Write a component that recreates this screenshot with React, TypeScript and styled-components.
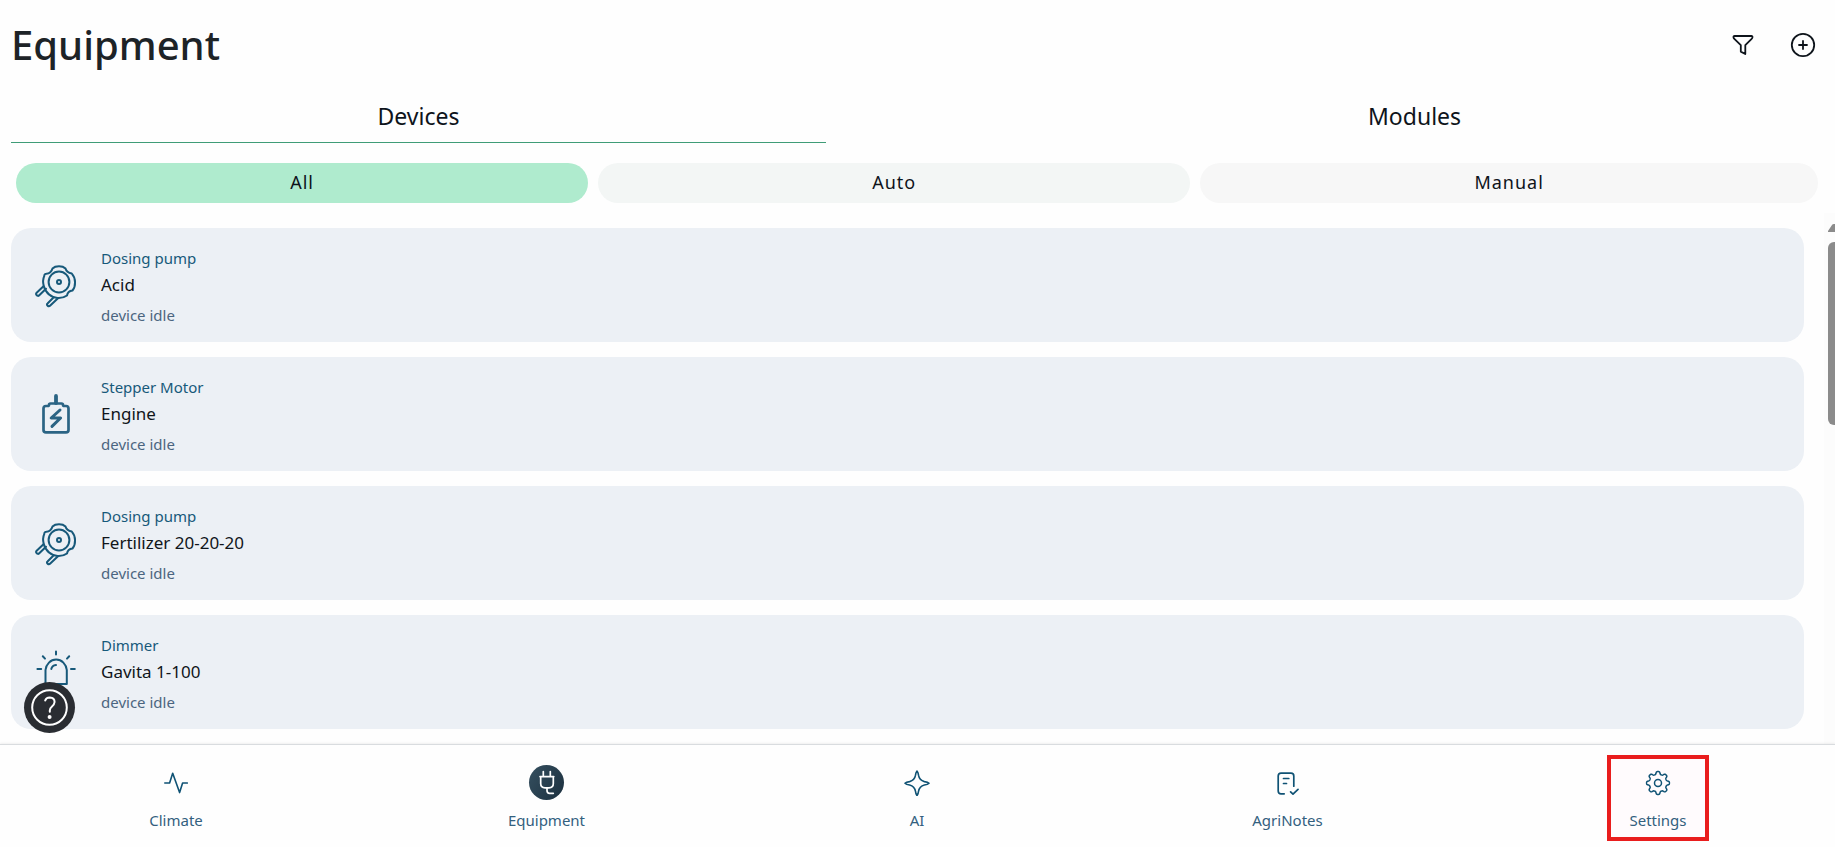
import React from "react";
import styled, { createGlobalStyle } from "styled-components";

const GlobalStyle = createGlobalStyle`
  *, *::before, *::after { box-sizing: border-box; }
  body {
    margin: 0;
    background: #fefefe;
    font-family: "Noto Sans", sans-serif;
    color: #0e141b;
  }
  button { font: inherit; color: inherit; border: 0; background: none; padding: 0; cursor: pointer; }
  a { color: inherit; text-decoration: none; }
  h1, p { margin: 0; }
  svg { display: block; fill: none; stroke: currentColor; stroke-linecap: round; stroke-linejoin: round; }
`;

const Page = styled.div`
  height: 100vh;
  display: flex;
  flex-direction: column;
  overflow: hidden;
`;

const Header = styled.header`
  display: flex;
  justify-content: space-between;
  align-items: center;
  height: 90px;
  padding: 0 18px 0 11px;
`;

const Title = styled.h1`
  font-size: 40px;
  line-height: 56px;
  font-weight: 500;
  color: #1d2327;
`;

const Actions = styled.div`
  display: flex;
  gap: 32px;
`;

const IconButton = styled.button`
  display: grid;
  place-items: center;
  width: 28px;
  height: 28px;
`;

const Tabs = styled.nav`
  display: flex;
  justify-content: space-between;
  padding: 0 13px 0 11px;
`;

const Tab = styled.button<{ $active?: boolean }>`
  width: 45%;
  height: 53px;
  padding-bottom: 1px;
  font-size: 23px;
  line-height: 32px;
  border-bottom: 1px solid ${(p) => (p.$active ? "#3f9c77" : "transparent")};
`;

const Filters = styled.div`
  display: flex;
  gap: 10px;
  padding: 20px 17px 10px 16px;
`;

const Pill = styled.button<{ $tone: string }>`
  flex: 1 1 auto;
  height: 40px;
  padding-bottom: 2px;
  border-radius: 20px;
  background: ${(p) => p.$tone};
  font-size: 18px;
  line-height: 24px;
  letter-spacing: 1px;
`;

const Content = styled.main`
  flex: 1;
  min-height: 0;
  display: flex;
  justify-content: space-between;
`;

const List = styled.ul`
  flex: 1;
  min-width: 0;
  margin: 0;
  padding: 15px 20px 0 11px;
  list-style: none;
  overflow: hidden;
  display: flex;
  flex-direction: column;
  gap: 15px;
`;

const Card = styled.li`
  flex: none;
  display: flex;
  align-items: center;
  gap: 21px;
  height: 114px;
  padding: 0 21px;
  border-radius: 20px;
  background: #ecf0f5;
  color: #17597a;
`;

const CardText = styled.div`
  padding-top: 6px;
`;

const DeviceKind = styled.p`
  font-size: 15px;
  line-height: 24px;
`;

const DeviceName = styled.p`
  font-size: 17px;
  line-height: 30px;
  color: #10151a;
`;

const DeviceState = styled.p`
  font-size: 15px;
  line-height: 30px;
  color: #4b6580;
`;

const ScrollTrack = styled.div`
  flex: none;
  width: 11px;
  padding: 11px 0 0 4px;
  background: #fcfcfc;
  overflow: hidden;
`;

const ScrollArrow = styled.svg`
  && { fill: #8b8b8b; stroke: none; }
`;

const ScrollThumb = styled.div`
  margin-top: 10px;
  height: 183px;
  border-radius: 6px 0 0 6px;
  background: #8b8b8b;
`;

const BottomNav = styled.nav`
  position: relative;
  flex: none;
  display: flex;
  justify-content: space-between;
  padding: 10px 126px 6px 125px;
  border-top: 1px solid #d9dcdf;
  box-shadow: 0 -1px 2px rgba(0, 0, 0, 0.06);
  background: #fefefe;
`;

const NavItem = styled.a<{ $marked?: boolean }>`
  display: flex;
  flex-direction: column;
  align-items: center;
  gap: 8px;
  width: 102px;
  height: 86px;
  padding-top: 6px;
  border: 4px solid ${(p) => (p.$marked ? "#e91d1d" : "transparent")};
  background: ${(p) => (p.$marked ? "#fffbfd" : "transparent")};
  color: #17557a;
`;

const NavIcon = styled.span<{ $active?: boolean }>`
  display: grid;
  place-items: center;
  width: 35px;
  height: 35px;
  border-radius: 50%;
  background: ${(p) => (p.$active ? "linear-gradient(120deg, #354f5f, #1c303f)" : "none")};
  color: ${(p) => (p.$active ? "#ffffff" : "#0f5274")};
`;

const NavLabel = styled.span`
  font-size: 15px;
  line-height: 24px;
  color: #33607e;
`;

const HelpButton = styled.button`
  position: absolute;
  left: 24px;
  bottom: 114px;
  width: 51px;
  height: 51px;
  border-radius: 50%;
  background: #2a2d32;
  color: #ffffff;
`;

const PumpIcon = () => (
  <svg width="48" height="48" viewBox="0 0 48 48" strokeWidth="2">
    <path d="M20.5 7.5C23.5 4.6 30.5 4.6 33.5 7.5C34.2 10.2 37 12 39.8 12.6C44 17 44 25.5 40.5 29.5C37.8 29.8 35.5 31.5 35 34.5C29.5 38.4 21.5 37.6 17.2 33.6C12 29.5 9.5 21 12.3 14.8C12.2 13.6 13 12.8 14.3 12.8C17 12.5 19.6 10.6 20.5 7.5Z" />
    <circle cx="27" cy="21" r="10.4" />
    <circle cx="27" cy="21" r="2" />
    <path d="M11.5 25.2L4.4 32Q3.5 33 4.5 34Q6 35.5 7 34.5L14 27.8" />
    <path d="M21.5 36.5L15.5 42.5Q14.4 43.5 15.5 44.6Q17 45.8 18 44.8L26 37.2" />
  </svg>
);

const MotorIcon = () => (
  <svg width="48" height="48" viewBox="0 0 48 48" strokeWidth="2.7" color="#2b6484">
    <path d="M24 6V13" strokeWidth="3.8" />
    <path d="M18.5 13.5H29.5Q31 13.5 31 15Q31 16 32.5 16H34Q36.5 16 36.5 18.5V40Q36.5 42.4 34 42.4H14Q11.5 42.4 11.5 40V18.5Q11.5 16 14 16H15.5Q17 16 17 15Q17 13.5 18.5 13.5Z" />
    <path d="M28 20L19.2 28H28.6L20 36.4" strokeWidth="3" />
  </svg>
);

const LampIcon = () => (
  <svg width="48" height="48" viewBox="0 0 48 48" strokeWidth="2">
    <path d="M13.5 36V22A10.7 11.5 0 0 1 34.8 22V36Z" />
    <path d="M19.3 21Q20 17.4 24 17M24 3.4V6.6M5.4 21H9.2M39 21H42.8M10.8 8.2L13 10.6M37.2 8.2L35 10.6" />
  </svg>
);

const FilterIcon = () => (
  <svg width="24" height="24" viewBox="0 0 24 24" strokeWidth="1.8">
    <path d="M3.6 3H20.4Q21.8 3 21.4 4.6Q21.2 5.4 20.4 6.1L14.3 12.2V21L9.8 18.6V12.2L3.6 6.1Q2.6 5.2 2.5 4.4Q2.3 3 3.6 3Z" />
  </svg>
);

const AddIcon = () => (
  <svg width="26" height="26" viewBox="0 0 26 26" strokeWidth="1.8">
    <circle cx="13" cy="13" r="11.2" />
    <path d="M13 9V17M9 13H17" />
  </svg>
);

const PulseIcon = () => (
  <svg width="24" height="24" viewBox="0 0 24 24" strokeWidth="1.6">
    <path d="M.8 12H5.6L8.7 2.2L15.6 21.6L18.6 12H23.3" />
  </svg>
);

const PlugIcon = () => (
  <svg width="35" height="35" viewBox="0 0 35 35" strokeWidth="1.7">
    <path d="M14.3 6.5V11.5M21.3 6.5V11.5M11 11.6H24.8M11.7 11.6V18.5Q11.7 22.8 16 22.8H20Q24.3 22.8 24.3 18.5V11.6M18 23V25.5Q18 28.3 20.6 28.3H24.3" />
  </svg>
);

const SparkIcon = () => (
  <svg width="26" height="26" viewBox="0 0 26 26" strokeWidth="1.6">
    <path d="M13 1Q14.2 2.4 14.5 5.2Q15.4 10.4 20.4 11.6Q23.8 12 25 13.3Q23.8 14.6 20.4 15Q15.4 16.2 14.5 21.4Q14.2 24.2 13 25.6Q11.8 24.2 11.5 21.4Q10.6 16.2 5.6 15Q2.2 14.6 1 13.3Q2.2 12 5.6 11.6Q10.6 10.4 11.5 5.2Q11.8 2.4 13 1Z" />
  </svg>
);

const NotesIcon = () => (
  <svg width="24" height="24" viewBox="0 0 24 24" strokeWidth="1.7">
    <path d="M8.2 22.8H5Q2.2 22.8 2.2 20V5Q2.2 2.2 5 2.2H15Q17.8 2.2 17.8 5V15.2M7.5 7.5H12.8M7.5 12.5H10.5M14.6 20.8L17 23.2L22 18.4" />
  </svg>
);

const gearPath = (() => {
  const points: string[] = [];
  for (let i = 0; i <= 144; i++) {
    const a = (i / 144) * Math.PI * 2;
    const r = 10.1 + 1.35 * Math.tanh(2.2 * Math.cos(8 * a));
    points.push(`${(13 + r * Math.sin(a)).toFixed(2)} ${(13 - r * Math.cos(a)).toFixed(2)}`);
  }
  return `M${points.join("L")}Z`;
})();

const GearIcon = () => (
  <svg width="26" height="26" viewBox="0 0 26 26" strokeWidth="1.5">
    <path d={gearPath} />
    <circle cx="13" cy="13" r="3.5" />
  </svg>
);

const HelpIcon = () => (
  <svg width="51" height="51" viewBox="0 0 51 51" strokeWidth="2">
    <circle cx="25.5" cy="25.5" r="17.3" />
    <path d="M21.2 18.6Q22 15.4 25.8 15.4Q30.6 15.6 30.6 20Q30.4 22.4 28 24.4Q25.8 26.2 25.8 28.6V29.8" />
    <circle cx="25.6" cy="35" r="1" fill="currentColor" />
  </svg>
);

const devices = [
  { kind: "Dosing pump", name: "Acid", Icon: PumpIcon },
  { kind: "Stepper Motor", name: "Engine", Icon: MotorIcon },
  { kind: "Dosing pump", name: "Fertilizer 20-20-20", Icon: PumpIcon },
  { kind: "Dimmer", name: "Gavita 1-100", Icon: LampIcon },
];

const filters = [
  { label: "All", tone: "#afebce" },
  { label: "Auto", tone: "#f3f6f5" },
  { label: "Manual", tone: "#f7f7f7" },
];

const navItems = [
  { label: "Climate", Icon: PulseIcon },
  { label: "Equipment", Icon: PlugIcon, active: true },
  { label: "AI", Icon: SparkIcon },
  { label: "AgriNotes", Icon: NotesIcon },
  { label: "Settings", Icon: GearIcon, marked: true },
];

export default function App() {
  return (
    <Page>
      <GlobalStyle />
      <Header>
        <Title>Equipment</Title>
        <Actions>
          <IconButton aria-label="Filter"><FilterIcon /></IconButton>
          <IconButton aria-label="Add device"><AddIcon /></IconButton>
        </Actions>
      </Header>
      <Tabs>
        <Tab $active>Devices</Tab>
        <Tab>Modules</Tab>
      </Tabs>
      <Filters>
        {filters.map((f) => (
          <Pill key={f.label} $tone={f.tone}>{f.label}</Pill>
        ))}
      </Filters>
      <Content>
        <List>
          {devices.map(({ kind, name, Icon }) => (
            <Card key={name}>
              <Icon />
              <CardText>
                <DeviceKind>{kind}</DeviceKind>
                <DeviceName>{name}</DeviceName>
                <DeviceState>device idle</DeviceState>
              </CardText>
            </Card>
          ))}
        </List>
        <ScrollTrack aria-hidden>
          <ScrollArrow width="14" height="8" viewBox="0 0 14 8">
            <path d="M0 8V7L4 1Q4.5 0 6 0H8Q9.5 0 10 1L14 7V8Z" />
          </ScrollArrow>
          <ScrollThumb />
        </ScrollTrack>
      </Content>
      <BottomNav>
        {navItems.map(({ label, Icon, active, marked }) => (
          <NavItem key={label} href="#" $marked={marked}>
            <NavIcon $active={active}><Icon /></NavIcon>
            <NavLabel>{label}</NavLabel>
          </NavItem>
        ))}
      </BottomNav>
      <HelpButton aria-label="Help"><HelpIcon /></HelpButton>
    </Page>
  );
}
